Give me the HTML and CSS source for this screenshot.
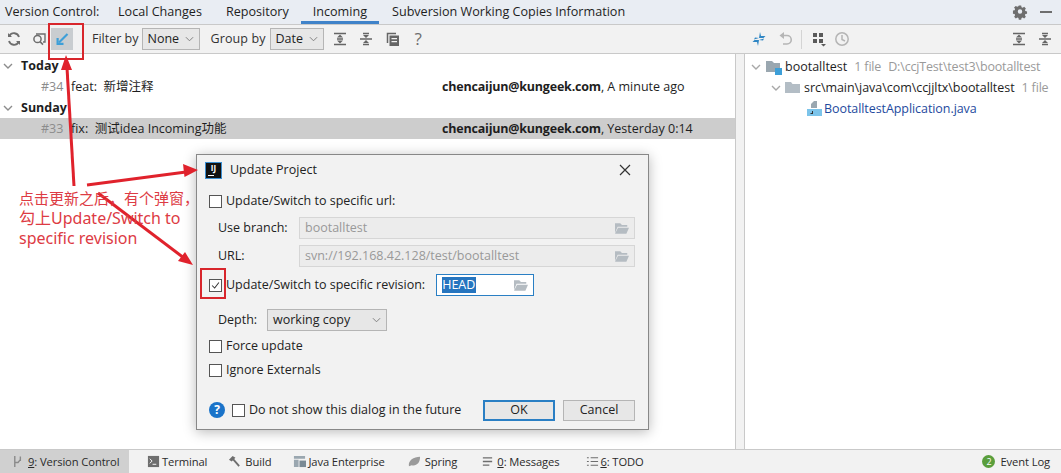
FILE: index.html
```html
<!DOCTYPE html>
<html lang="en">
<head>
<meta charset="utf-8">
<title>Version Control</title>
<link rel="stylesheet" href="styles.css">
</head>
<body>
<div class="app">
  <header class="tabs">
    <span class="tab-title">Version Control:</span>
    <span class="tab">Local Changes</span>
    <span class="tab">Repository</span>
    <span class="tab active">Incoming</span>
    <span class="tab">Subversion Working Copies Information</span>
    <span class="spacer"></span>
    <svg class="ico" viewBox="0 0 16 16"><path fill="#6e6e6e" fill-rule="evenodd" d="M6.6 1h2.8l.4 2 1.3.6 1.8-1.1 2 2-1.1 1.8.5 1.3 2 .4v2.8l-2 .4-.5 1.3 1.1 1.8-2 2-1.8-1.1-1.3.5-.4 2H6.6l-.4-2-1.3-.5-1.8 1.1-2-2 1.1-1.8-.5-1.3-2-.4V7l2-.4.5-1.3L1 3.5l2-2 1.8 1.1 1.3-.6zM8 5.6a2.6 2.6 0 100 5.2 2.6 2.6 0 000-5.2z" transform="translate(1.2 .6) scale(.85)"/></svg>
    <span class="minimize"></span>
  </header>
  <div class="workspace">
    <section class="left">
      <div class="toolbar">
        <svg class="ico" viewBox="0 0 16 16"><path fill="none" stroke="#6e6e6e" stroke-width="1.8" d="M13 6a5.2 5.2 0 00-9.6-1M3 10a5.2 5.2 0 009.6 1"/><path fill="#6e6e6e" d="M2 2v4h4zM14 14v-4h-4z"/></svg>
        <svg class="ico search-ico" viewBox="0 0 16 16"><path fill="none" stroke="#6e6e6e" stroke-width="1.4" d="M5 3h9v8h-2"/><circle cx="6.5" cy="8" r="3.6" fill="#f2f2f2" stroke="#6e6e6e" stroke-width="1.5"/><path stroke="#6e6e6e" stroke-width="1.6" d="M9 10.600l3 3"/></svg>
        <span class="pressed"><svg class="ico" viewBox="0 0 16 16"><path fill="none" stroke="#3d9fd8" stroke-width="2.2" d="M13.500 3L5 11.500"/><path fill="#3d9fd8" d="M2.500 7v7h7v-2.200H4.700V7z"/></svg></span>
        <span class="label filter">Filter by</span>
        <span class="select none">None<svg class="chev" viewBox="0 0 10 6"><path fill="none" stroke="#777" d="M1 1l4 4 4-4"/></svg></span>
        <span class="label group">Group by</span>
        <span class="select date">Date<svg class="chev" viewBox="0 0 10 6"><path fill="none" stroke="#777" d="M1 1l4 4 4-4"/></svg></span>
        <svg class="ico expand" viewBox="0 0 16 16"><path stroke="#666" stroke-width="1.500" d="M2 2.500h12M2 13.500h12M5 8h6"/><path fill="#666" d="M8 3.500l3 3H5zM8 12.500l-3-3h6z"/></svg>
        <svg class="ico collapse" viewBox="0 0 16 16"><path stroke="#666" stroke-width="1.500" d="M2 8h12M5 2.500h6M5 13.500h6"/><path fill="#666" d="M8 7L5 4h6zM8 9l3 3H5z"/></svg>
        <svg class="ico copy" viewBox="0 0 16 16"><path fill="none" stroke="#666" stroke-width="1.500" d="M2.500 12V2.500H11"/><path fill="#666" fill-rule="evenodd" d="M4.500 4.500H14V15H4.500zM6.500 7v1.300H12V7zm0 3v1.300H12V10z"/></svg>
        <span class="help-mark">?</span>
      </div>
      <div class="tree">
        <div class="group-row"><svg class="arrow" viewBox="0 0 10 6"><path fill="none" stroke="#8c8c8c" stroke-width="1.400" d="M1 1l4 4 4-4"/></svg><b>Today</b></div>
        <div class="commit"><span class="num">#34</span><span class="msg">feat:&nbsp;&nbsp;新增注释</span><span class="who"><b>chencaijun@kungeek.com</b>, A minute ago</span></div>
        <div class="group-row"><svg class="arrow" viewBox="0 0 10 6"><path fill="none" stroke="#8c8c8c" stroke-width="1.400" d="M1 1l4 4 4-4"/></svg><b>Sunday</b></div>
        <div class="commit selected"><span class="num">#33</span><span class="msg">fix:&nbsp;&nbsp;测试idea Incoming功能</span><span class="who"><b>chencaijun@kungeek.com</b>, Yesterday 0:14</span></div>
      </div>
    </section>
    <section class="right">
      <div class="toolbar rtool">
        <svg class="ico" viewBox="0 0 16 16"><path fill="#2f86c4" d="M9 1l1 4h4.500L12.500 7H8zM7 15l-1-4H1.500l2-2H8z"/><path fill="#2f86c4" d="M8 7l-5 1.500 1-2zM8 9l5-1.500-1 2z"/></svg>
        <svg class="ico undo" viewBox="0 0 16 16"><path fill="none" stroke="#b5b5b5" stroke-width="1.600" d="M4 4.500h5a4.200 4.200 0 010 8.500H5"/><path fill="#b5b5b5" d="M6 1v7L1.500 4.500z"/></svg>
        <span class="sep"></span>
        <svg class="ico" viewBox="0 0 16 16"><path fill="#5a5a5a" d="M2 2h4v4H2zM8 2h4v4H8zM2 8h4v4H2zM8 8h4v4H8zM10 13h5l-2.500 2.500z"/></svg>
        <svg class="ico clock" viewBox="0 0 16 16"><circle cx="8" cy="8" r="6.200" fill="none" stroke="#b5b5b5" stroke-width="1.500"/><path fill="none" stroke="#b5b5b5" stroke-width="1.500" d="M8 4v4.500l3 1.500"/></svg>
        <span class="spacer"></span>
        <svg class="ico" viewBox="0 0 16 16"><path stroke="#666" stroke-width="1.500" d="M2 2.500h12M2 13.500h12M5 8h6"/><path fill="#666" d="M8 3.500l3 3H5zM8 12.500l-3-3h6z"/></svg>
        <svg class="ico rcollapse" viewBox="0 0 16 16"><path stroke="#666" stroke-width="1.500" d="M2 8h12M5 2.500h6M5 13.500h6"/><path fill="#666" d="M8 7L5 4h6zM8 9l3 3H5z"/></svg>
      </div>
      <div class="files">
        <div class="file-row lvl0"><svg class="arrow" viewBox="0 0 10 6"><path fill="none" stroke="#a8a8a8" stroke-width="1.400" d="M1 1l4 4 4-4"/></svg><svg class="ico16" viewBox="0 0 16 16"><path fill="#9aa7b0" d="M0 2h6l2 2h6v9H0z"/><path fill="#3d9fd8" d="M9 9h7v7H9z"/></svg><span>bootalltest</span><span class="dim gap1">1 file</span><span class="dim gap2">D:\ccjTest\test3\bootalltest</span></div>
        <div class="file-row lvl1"><svg class="arrow" viewBox="0 0 10 6"><path fill="none" stroke="#a8a8a8" stroke-width="1.400" d="M1 1l4 4 4-4"/></svg><svg class="ico16" viewBox="0 0 16 16"><path fill="#b3bdc5" d="M0 2h6l1.500 2H15v9H0z"/></svg><span class="tight">src\main\java\com\ccjjltx\bootalltest</span><span class="dim gap1">1 file</span></div>
        <div class="file-row lvl2"><svg class="ico16" viewBox="0 0 16 16"><path fill="#9aa7b0" d="M7 0h3v7H4V3z"/><path fill="#7cc4ea" d="M0 8h15v7H0z"/><path fill="#333" d="M5 10h1v3H3.500v-1H5z"/></svg><span class="link">BootalltestApplication.java</span></div>
      </div>
    </section>
  </div>
  <footer class="status">
    <span class="st first"><svg class="ico13" viewBox="0 0 14 14"><path fill="none" stroke="#8a8a8a" stroke-width="1.500" d="M3 1v12M3 8h3.500L9 5M9 1.500v5"/></svg><span><u>9</u>: Version Control</span></span>
    <span class="st terminal"><svg class="ico13" viewBox="0 0 14 14"><path fill="#6e6e6e" d="M1 1h12v12H1z"/><path fill="none" stroke="#fff" d="M3 4l2.500 2.500L3 9M6 10h4"/></svg>Terminal</span>
    <span class="st build"><svg class="ico13" viewBox="0 0 14 14"><path fill="none" stroke="#6e6e6e" stroke-width="2" d="M5 4l7 8"/><path fill="#6e6e6e" d="M1 5l4-4 3 2-4 4z"/></svg>Build</span>
    <span class="st java"><svg class="ico13" viewBox="0 0 14 14"><path fill="#9aa7b0" d="M1 1h12v3H1zM1 5h5v8H1z"/><path fill="#7a8a94" d="M7 6h7v7H7z"/></svg>Java Enterprise</span>
    <span class="st spring"><svg class="ico13" viewBox="0 0 14 14"><path fill="#9a9a9a" d="M1 12C0 6 6 2 13 2c0 7-4 10-9 9z"/></svg>Spring</span>
    <span class="st msgs"><svg class="ico13" viewBox="0 0 14 14"><path stroke="#6e6e6e" stroke-width="1.400" d="M2 3h10M2 7h10M2 11h7"/></svg><span><u>0</u>: Messages</span></span>
    <span class="st todo"><svg class="ico13" viewBox="0 0 14 14"><path stroke="#6e6e6e" stroke-width="1.200" d="M1 3h2M5 3h8M1 7h2M5 7h8M1 11h2M5 11h8"/></svg><span><u>6</u>: TODO</span></span>
    <span class="spacer"></span>
    <span class="st event"><span class="badge">2</span>Event Log</span>
  </footer>
</div>

<div class="dialog">
  <div class="dlg-title">
    <span class="ij">IJ</span><span class="dlg-name">Update Project</span><span class="spacer"></span>
    <svg class="close" viewBox="0 0 12 12"><path stroke="#333" stroke-width="1.200" d="M1 1l10 10M11 1L1 11"/></svg>
  </div>
  <div class="dlg-row r-url"><span class="cb"></span>Update/Switch to specific url:</div>
  <div class="dlg-row r-branch"><span class="fld-label">Use branch:</span><span class="field">bootalltest<svg class="folder" viewBox="0 0 16 12"><path fill="#b5bcc2" d="M0 0h6l2 2h6v2H3L0 11zM3.500 5H16l-3 7H0z"/></svg></span></div>
  <div class="dlg-row r-urlf"><span class="fld-label">URL:</span><span class="field">svn://192.168.42.128/test/bootalltest<svg class="folder" viewBox="0 0 16 12"><path fill="#b5bcc2" d="M0 0h6l2 2h6v2H3L0 11zM3.500 5H16l-3 7H0z"/></svg></span></div>
  <div class="dlg-row r-rev"><span class="cb checked"><svg viewBox="0 0 13 13"><path fill="none" stroke="#333" stroke-width="1.200" d="M2.500 6.500l3 3 5-6.500"/></svg></span>Update/Switch to specific revision:<span class="head"><span class="sel-text">HEAD</span><svg class="folder" viewBox="0 0 16 12"><path fill="#b5bcc2" d="M0 0h6l2 2h6v2H3L0 11zM3.500 5H16l-3 7H0z"/></svg></span></div>
  <div class="dlg-row r-depth"><span class="fld-label">Depth:</span><span class="depth">working copy<svg class="chev" viewBox="0 0 10 6"><path fill="none" stroke="#777" d="M1 1l4 4 4-4"/></svg></span></div>
  <div class="dlg-row r-force"><span class="cb"></span>Force update</div>
  <div class="dlg-row r-ignore"><span class="cb"></span>Ignore Externals</div>
  <div class="dlg-row r-foot">
    <span class="q">?</span><span class="cb"></span>Do not show this dialog in the future<span class="spacer"></span>
    <span class="btn ok">OK</span><span class="btn">Cancel</span>
  </div>
</div>

<svg class="marks" viewBox="0 0 1061 473" aria-hidden="true">
  <rect x="49" y="24" width="34" height="35" fill="none" stroke="#d8262c" stroke-width="2"/>
  <rect x="201" y="269" width="24" height="29" fill="none" stroke="#d8262c" stroke-width="2"/>
  <g stroke="#e0222c" stroke-width="3" fill="none">
    <path d="M74 186L67 68"/>
    <path d="M87 185L186 172"/>
    <path d="M98 193L184 258"/>
  </g>
  <g fill="#e0222c">
    <path d="M66 55l6 15h-11z"/>
    <path d="M198 170l-15-6 1.500 13z"/>
    <path d="M193 265l-15-4 7-9z"/>
  </g>
</svg>
<div class="note"><span class="note-cjk">点击更新之后，有个弹窗，</span><br>勾上Update/Switch to<br>specific revision</div>
</body>
</html>
```

FILE: styles.css
```css
* { box-sizing: border-box; }
html, body { margin: 0; height: 100%; overflow: hidden; }
body {
  width: 1061px; height: 473px; position: relative; background: #fff; color: #1e1e1e;
  font: 12.5px/16px "Open Sans", "Noto Sans CJK SC", sans-serif;
}
.app { display: flex; flex-direction: column; height: 473px; }
.spacer { flex: 1; }
.ico { width: 16px; height: 16px; flex: none; display: block; }
.ico16 { width: 16px; height: 16px; flex: none; margin-right: 3px; }
.ico13 { width: 13px; height: 13px; flex: none; }

.tabs { height: 25px; flex: none; display: flex; align-items: center; background: #e9edf3; border-bottom: 1px solid #c9c9c9; padding: 0 9px 0 5px; font-size: 12.6px; }
.tab-title { width: 113px; }
.tab { height: 24px; line-height: 24px; margin-right: 24px; position: relative; }
.tab.active { padding: 0 12px; margin: 0 13px 0 -12px; }
.tab.active::after { content: ""; position: absolute; left: 0; right: 0; bottom: 0; height: 3px; background: #4083c9; }
.minimize { width: 12px; height: 2px; background: #6e6e6e; margin-left: 12px; }

.workspace { flex: 1; min-height: 0; display: flex; }
.toolbar { height: 29px; display: flex; align-items: center; background: #f2f2f2; border-bottom: 1px solid #c9c9c9; }
.left { width: 736px; flex: none; display: flex; flex-direction: column; }
.left .toolbar { padding-left: 6px; }
.search-ico { margin-left: 9px; }
.pressed { width: 22px; height: 22px; margin-left: 4px; background: #c9cdd0; display: flex; align-items: center; justify-content: center; }
.label { color: #333; }
.filter { margin-left: 19px; }
.group { margin-left: 11px; letter-spacing: .1px; }
.select { height: 22px; display: flex; align-items: center; justify-content: space-between; background: #e7e7e7; border: 1px solid #b5b5b5; padding: 0 5px; margin-left: 3px; }
.none { width: 58px; }
.date { width: 54px; margin-left: 4px; }
.chev { width: 9px; height: 6px; flex: none; }
.expand { margin-left: 8px; }
.collapse { margin-left: 10px; }
.copy { margin-left: 11px; }
.help-mark { margin-left: 14px; font-size: 17px; color: #6e6e6e; }

.tree { flex: 1; background: #fff; border-right: 1px solid #c9c9c9; padding-top: 1px; }
.group-row { height: 21px; display: flex; align-items: center; padding-left: 3px; }
.group-row b { margin-left: 8px; font-weight: 700; }
.arrow { width: 10px; height: 6px; flex: none; }
.commit { height: 21px; display: flex; align-items: center; position: relative; }
.commit.selected { background: #cdcdcd; }
.num { width: 71px; padding-left: 41px; color: #8c8c8c; }
.msg { width: 371px; white-space: nowrap; }
.who { white-space: nowrap; }
.who b { font-weight: 700; letter-spacing: -.2px; }

.right { flex: 1; display: flex; flex-direction: column; background: #f2f2f2; }
.rtool { padding: 0 8px 0 15px; }
.undo { margin-left: 11px; }
.sep { width: 1px; height: 19px; background: #d4d4d4; margin: 0 9px 0 7px; }
.clock { margin-left: 7px; }
.rcollapse { margin-left: 10px; }
.files { flex: 1; background: #fff; margin-left: 8px; border-left: 1px solid #c9c9c9; padding-top: 2px; }
.file-row { height: 21px; display: flex; align-items: center; white-space: nowrap; }
.lvl0 { padding-left: 6px; }
.lvl0 .arrow { margin-right: 5px; }
.lvl1 { padding-left: 26px; }
.lvl1 .arrow { margin-right: 4px; }
.lvl2 { padding-left: 62px; }
.lvl2 .ico16 { margin-right: 1px; }
.tight { letter-spacing: -.05px; }
.link { letter-spacing: -.07px; color: #1e4a9e; }
.dim { color: #9a9a9a; letter-spacing: -.17px; }
.gap1 { margin-left: 7px; }
.gap2 { margin-left: 7px; }

.status { height: 24px; flex: none; display: flex; align-items: center; background: #f2f2f2; border-top: 1px solid #c9c9c9; font-size: 11.2px; color: #2a2a2a; padding-right: 11px; white-space: nowrap; }
.st { display: flex; align-items: center; height: 100%; letter-spacing: -.1px; }
.st.first { background: #d0d0d0; padding-left: 12px; width: 129px; margin-right: 18px; }
.first .ico13 { margin-right: 3px; }
.terminal { margin-right: 21px; }
.terminal .ico13 { margin-right: 2px; }
.build { margin-right: 22px; }
.build .ico13 { margin-right: 4px; }
.java { margin-right: 23px; }
.java .ico13 { margin-right: 2px; }
.spring { margin-right: 24px; }
.spring .ico13 { margin-right: 4px; }
.msgs { margin-right: 27px; }
.msgs .ico13 { margin-right: 3px; }
.todo .ico13 { margin-right: 1px; }
.badge { width: 13px; height: 13px; border-radius: 50%; background: #5a9e3c; color: #fff; font-size: 9px; line-height: 13px; text-align: center; margin-right: 5px; }

.dialog { position: absolute; left: 196px; top: 154px; width: 453px; height: 276px; background: #f2f2f2; border: 1px solid #888; box-shadow: 0 2px 12px rgba(0,0,0,.28); color: #222; padding: 0 13px 0 12px; display: flex; flex-direction: column; }
.dlg-title { height: 30px; display: flex; align-items: center; margin: 0 -1px 0 -3px; flex: none; }
.ij { width: 15px; height: 15px; background: #111; color: #fff; font-size: 8px; line-height: 10px; font-weight: 700; outline: 1px solid #3d8fd1; text-align: center; position: relative; }
.ij::after { content: ""; position: absolute; left: 2px; bottom: 2px; width: 6px; height: 1px; background: #fff; }
.dlg-name { margin-left: 9px; }
.close { width: 12px; height: 12px; margin-right: 5px; }
.dlg-row { display: flex; align-items: center; flex: none; white-space: nowrap; }
.cb { width: 13px; height: 13px; flex: none; background: #fff; border: 1px solid #555; margin-right: 4px; display: block; }
.cb svg { display: block; width: 11px; height: 11px; }
.r-url { height: 22px; margin-top: 5px; }
.r-branch { height: 22px; margin-top: 5px; padding-left: 9px; }
.r-urlf { height: 22px; margin-top: 6px; padding-left: 9px; }
.r-rev { height: 22px; margin-top: 7px; }
.r-depth { height: 22px; margin-top: 13px; padding-left: 9px; }
.r-force { height: 20px; margin-top: 5px; }
.r-ignore { height: 20px; margin-top: 4px; }
.r-foot { height: 22px; margin-top: 19px; }
.fld-label { flex: none; }
.r-branch .fld-label, .r-urlf .fld-label { width: 81px; }
.r-depth .fld-label { width: 49px; }
.field { width: 336px; height: 22px; background: #ececec; border: 1px solid #d6d6d6; color: #999; padding: 0 5px; display: flex; align-items: center; justify-content: space-between; }
.folder { width: 14px; height: 11px; flex: none; }
.head { width: 98px; height: 22px; margin-left: 11px; background: #fff; border: 1px solid #2a7fc4; padding: 0 5px; display: flex; align-items: center; justify-content: space-between; }
.sel-text { background: #2675bf; color: #fff; padding: 0 1px 0 0; }
.depth { width: 120px; height: 22px; background: #e7e7e7; border: 1px solid #b5b5b5; padding: 0 5px; display: flex; align-items: center; justify-content: space-between; }
.q { width: 16px; height: 16px; border-radius: 50%; background: #1a73c9; color: #fff; text-align: center; font-weight: 700; font-size: 12px; line-height: 16px; margin-right: 7px; flex: none; }
.btn { width: 72px; height: 21px; display: flex; align-items: center; justify-content: center; background: #e7e7e7; border: 1px solid #b5b5b5; margin-left: 8px; }
.btn.ok { border: 2px solid #2a7fc4; margin-left: 0; }

.marks { position: absolute; left: 0; top: 0; width: 1061px; height: 473px; pointer-events: none; }
.note { position: absolute; left: 19px; top: 188px; font: 16px/20px "Noto Sans", "Noto Sans CJK SC", sans-serif; color: #dd3b44; white-space: nowrap; }
.note-cjk { font-size: 15px; }
```
